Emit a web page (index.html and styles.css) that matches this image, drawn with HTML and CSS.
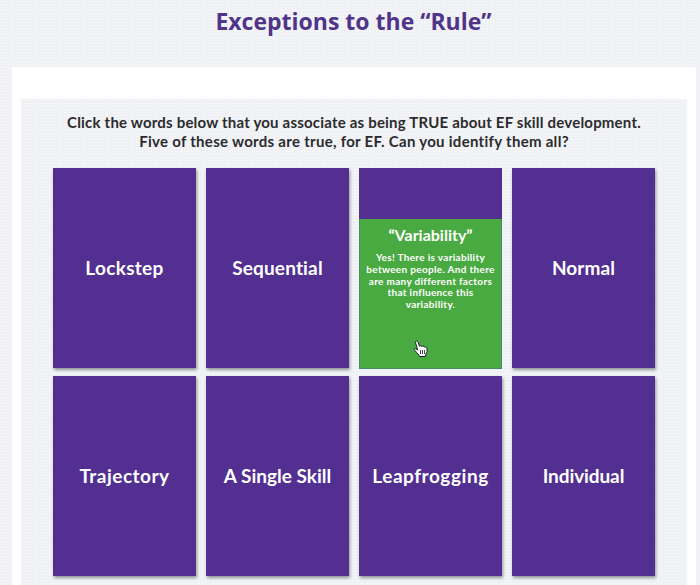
FILE: index.html
```html
<!DOCTYPE html>
<html lang="en">
<head>
  <meta charset="UTF-8">
  <meta name="viewport" content="width=device-width, initial-scale=1.0">
  <title>Exceptions to the “Rule”</title>
  <link rel="stylesheet" href="styles.css">
</head>
<body>

  <h1 class="title">Exceptions to the “Rule”</h1>

  <div class="container">
    <div class="activity">
      <p class="instructions">Click the words below that you associate as being TRUE about EF skill development.<br><span class="second-line">Five of these words are true, for EF. Can you identify them all?</span></p>

      <div class="cards">
        <div class="card"><span class="word lockstep">Lockstep</span></div>
        <div class="card"><span class="word sequential">Sequential</span></div>
        <div class="card open">
          <div class="answer">
            <h2>“Variability”</h2>
            <p>Yes! There is variability<br>between people. And there<br>are many different factors<br>that influence this<br>variability.</p>
          </div>
          <svg class="hand" width="16" height="18" viewBox="0 0 16 18">
            <path d="M4.7 10.2 3 4.2C2.5 2.6 2.1 1.5 3.2 1.1 4.3.7 4.9 1.7 5.3 2.9L6.5 6.3C7.1 5.5 8.4 5.6 8.8 6.6 9.6 5.7 10.9 6 11.3 7.1 12.2 6.4 13.5 7 13.8 8.3 14.5 11 14 12.5 12.8 14.2L12.7 16.5H6.6C6 14.6 4.1 13.3 2.6 11.4 1.9 10.3 1 9.5 1.6 8.8 2.5 8 3.7 9 4.7 10.2Z" fill="#fff" stroke="#1c1c2c" stroke-width="1"/>
            <path d="M7.5 10v4M9.5 10v4M11.5 10v4" stroke="#1c1c2c" stroke-width=".8"/>
          </svg>
        </div>
        <div class="card"><span class="word normal">Normal</span></div>
        <div class="card"><span class="word trajectory">Trajectory</span></div>
        <div class="card"><span class="word single">A Single Skill</span></div>
        <div class="card"><span class="word leapfrogging">Leapfrogging</span></div>
        <div class="card"><span class="word individual">Individual</span></div>
      </div>
    </div>
  </div>

</body>
</html>
```
FILE: styles.css
```css
body {
  margin: 0;
  height: 585px;
  overflow: hidden;
  display: flex;
  flex-direction: column;
  background-color: #eff1f4;
  background-image: radial-gradient(circle, #fafbfc 0.8px, transparent 1px);
  background-size: 3px 3px;
  font-family: Lato, "Liberation Sans", sans-serif;
}

.title {
  margin: 0;
  padding: 5px 0 0 7px;
  height: 62px;
  flex-shrink: 0;
  font-family: "Open Sans", "Noto Sans", sans-serif;
  font-size: 23px;
  line-height: 32px;
  font-weight: 700;
  text-align: center;
  color: #50348a;
}

.container {
  margin: 0 4px 0 12px;
  padding: 32px 9px 0;
  background-color: #fff;
}

.activity {
  height: 486px;
  padding: 14px 32px 0;
  background-color: #eff1f4;
  background-image: radial-gradient(circle, #fafbfc 0.8px, transparent 1px);
  background-size: 3px 3px;
}

.instructions {
  margin: 0 -10px;
  height: 55px;
  font-size: 15px;
  line-height: 19px;
  font-weight: 700;
  letter-spacing: 0.2px;
  text-align: center;
  white-space: nowrap;
  color: #2b2b2e;
}

.second-line {
  letter-spacing: 0.29px;
}

.cards {
  display: grid;
  grid-template-columns: repeat(4, 143px);
  grid-auto-rows: 200px;
  gap: 8px 10px;
}

.card {
  display: flex;
  align-items: center;
  justify-content: center;
  background-color: #522f91;
  box-shadow: 1px 2px 3px rgba(0, 0, 0, 0.4);
  color: #fff;
}

.word {
  font-size: 19px;
  line-height: 24px;
  font-weight: 700;
  white-space: nowrap;
}

.lockstep {
  letter-spacing: 0.3px;
}

.sequential {
  letter-spacing: 0.15px;
}

.normal {
  letter-spacing: 0.1px;
}

.trajectory {
  letter-spacing: 0.5px;
}

.leapfrogging {
  letter-spacing: 0.55px;
}

.individual {
  letter-spacing: -0.1px;
}

/* card with its answer sliding up */
.open {
  position: relative;
  align-items: flex-end;
  box-shadow: none;
}

.answer {
  width: 143px;
  height: 150px;
  margin-bottom: -1px;
  box-sizing: border-box;
  padding-top: 6px;
  background-color: #4aaa42;
  border: 1px solid #438d66;
  border-top-color: #4aaa42;
  text-align: center;
}

.answer h2 {
  margin: 0 0 8px;
  font-size: 16px;
  line-height: 18px;
  font-weight: 700;
}

.answer p {
  margin: 0;
  font-size: 10px;
  line-height: 11.8px;
  font-weight: 700;
  letter-spacing: 0.32px;
  white-space: nowrap;
}

.hand {
  position: absolute;
  left: 54px;
  top: 172px;
}
```
